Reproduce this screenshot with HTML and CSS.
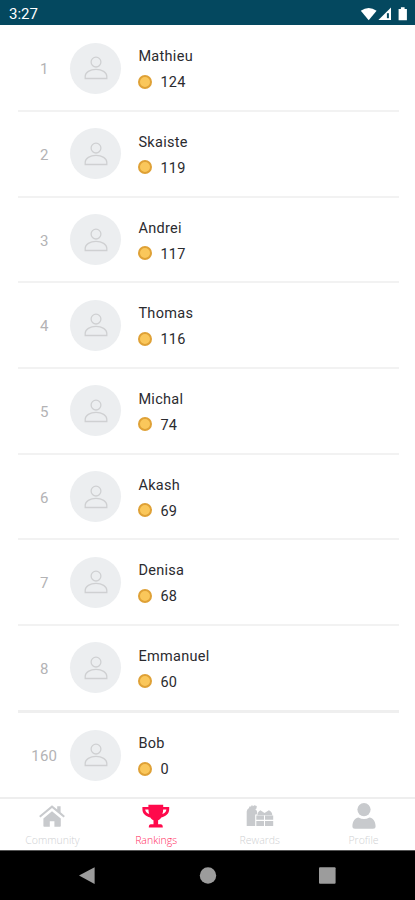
FILE: index.html
```html
<!DOCTYPE html>
<html lang="en">
<head>
<meta charset="utf-8">
<title>Rankings</title>
<link rel="stylesheet" href="styles.css">
</head>
<body>
<svg class="defs" width="0" height="0">
  <symbol id="person" viewBox="0 0 24 24">
    <circle cx="12" cy="6.1" r="4.9"/>
    <path d="M1.2 22.5V20.3C1.2 16.4 6 13.3 12 13.3S22.8 16.4 22.8 20.3V22.5Z"/>
  </symbol>
</svg>
<header class="status">
  <span>3:27</span>
  <svg class="status-icons" width="48" height="16" viewBox="0 0 48 16">
    <path d="M0.8 4.8Q8.7-.7 16.6 4.8L8.7 14.3Z"/>
    <path d="M31 1.5V14H18.4Z"/>
    <path class="signal-gap" d="M26.9 7.2h2v5h-2Z"/>
    <path d="M38.6 3h2.3V1.2h3.7V3h2.3v11.2h-8.3Z"/>
  </svg>
</header>
<main class="list">
  <div class="row"><span class="rank">1</span><span class="avatar"><svg><use href="#person"/></svg></span><div class="info"><span class="name">Mathieu</span><span class="score"><i class="coin"></i>124</span></div></div>
  <div class="row"><span class="rank">2</span><span class="avatar"><svg><use href="#person"/></svg></span><div class="info"><span class="name">Skaiste</span><span class="score"><i class="coin"></i>119</span></div></div>
  <div class="row"><span class="rank">3</span><span class="avatar"><svg><use href="#person"/></svg></span><div class="info"><span class="name">Andrei</span><span class="score"><i class="coin"></i>117</span></div></div>
  <div class="row"><span class="rank">4</span><span class="avatar"><svg><use href="#person"/></svg></span><div class="info"><span class="name">Thomas</span><span class="score"><i class="coin"></i>116</span></div></div>
  <div class="row"><span class="rank">5</span><span class="avatar"><svg><use href="#person"/></svg></span><div class="info"><span class="name">Michal</span><span class="score"><i class="coin"></i>74</span></div></div>
  <div class="row"><span class="rank">6</span><span class="avatar"><svg><use href="#person"/></svg></span><div class="info"><span class="name">Akash</span><span class="score"><i class="coin"></i>69</span></div></div>
  <div class="row"><span class="rank">7</span><span class="avatar"><svg><use href="#person"/></svg></span><div class="info"><span class="name">Denisa</span><span class="score"><i class="coin"></i>68</span></div></div>
  <div class="row last"><span class="rank">8</span><span class="avatar"><svg><use href="#person"/></svg></span><div class="info"><span class="name">Emmanuel</span><span class="score"><i class="coin"></i>60</span></div></div>
  <div class="row own"><span class="rank">160</span><span class="avatar"><svg><use href="#person"/></svg></span><div class="info"><span class="name">Bob</span><span class="score"><i class="coin"></i>0</span></div></div>
</main>
<nav class="tabs">
  <a class="tab">
    <svg width="28" height="28" viewBox="0 0 28 28">
      <path d="M14 9.2 22.8 16.5V23.9q0 .8-.8.8H16.4V19.2H11.8V24.7H6.2q-.8 0-.8-.8V16.5Z"/>
      <path d="M14 3.2 19.2 7.5V4.2H22.6V10.2L26.9 13.9 25.6 15.5 14 6.1 2.4 15.5 1.1 13.9Z"/>
    </svg>
    <span>Community</span>
  </a>
  <a class="tab active">
    <svg width="28" height="28" viewBox="0 0 28 28">
      <path fill-rule="evenodd" d="M6.4 2.7H21.2V5H27.2V7.3C27.2 11.4 24 14.6 19.3 15.4C18 17.2 16.8 18 16.1 18.3V22.3H18.7Q20.8 22.3 20.8 25.5H6.8Q6.8 22.3 8.9 22.3H11.5V18.3C10.8 18 9.6 17.2 8.3 15.4C3.6 14.6.4 11.4.4 7.3V5H6.4ZM3.2 7.6C3.4 9.6 4.8 11.2 7.2 12Q6.5 10 6.4 7.6ZM21.2 7.6Q21.1 10 20.4 12C22.8 11.2 24.2 9.6 24.4 7.6Z"/>
    </svg>
    <span>Rankings</span>
  </a>
  <a class="tab">
    <svg width="28" height="28" viewBox="0 0 28 28">
      <path d="M.7 24V9.5Q.9 7.2 3 6L3.4 4.6H5.2V3.6H6.8V4.6L8.2 3.2 10.8 4.1 10.5 6.4 9.3 7.2Q11 8.3 11.2 10.2L10.8 12.6H9.2V24Z"/>
      <path d="M10.3 13.6H18V17.8H10.3ZM19 13.6H27.2V17.8H19ZM10.3 19.1H18V24H10.3ZM19 19.1H27.2V24H19Z"/>
      <path d="M11.4 13.2Q11.2 10 14.4 8.2L18.5 10.9 22.9 8.2Q26.6 10 26.2 13.2Z"/>
    </svg>
    <span>Rewards</span>
  </a>
  <a class="tab">
    <svg width="28" height="28" viewBox="0 0 28 28">
      <circle cx="14" cy="7.6" r="6.6"/>
      <path d="M2.4 24.3C2.4 19 5.4 15.4 8.5 15.4Q14 18.4 19.5 15.4C22.6 15.4 25.6 19 25.6 24.3Q25.6 26.8 23 26.8H5Q2.4 26.8 2.4 24.3Z"/>
    </svg>
    <span>Profile</span>
  </a>
</nav>
<footer class="system">
  <svg width="18" height="18" viewBox="0 0 18 18"><path d="M15.6.3V16.9L0 8.6Z"/></svg>
  <svg width="18" height="18" viewBox="0 0 18 18"><circle cx="9" cy="8.5" r="8.2"/></svg>
  <svg width="18" height="18" viewBox="0 0 18 18"><rect x="0" y=".2" width="16.6" height="16.6" rx="1"/></svg>
</footer>
</body>
</html>
```
FILE: styles.css
```css
* { box-sizing: border-box; }
body {
  margin: 0;
  width: 415px;
  height: 900px;
  display: flex;
  flex-direction: column;
  overflow: hidden;
  background: #fff;
  font-family: Roboto, sans-serif;
  color: #2b2b2f;
}
.defs { display: none; }
.status {
  height: 25px;
  flex: none;
  display: flex;
  align-items: center;
  justify-content: space-between;
  padding: 2px 7px 0 9px;
  background: #04485f;
  color: #fff;
  font-size: 15px;
}
.status-icons { fill: #fff; }
.status-icons .signal-gap { fill: #04485f; }
.list {
  height: 772px;
  flex: none;
  padding: 1.3px 16px 0 18px;
}
.row {
  height: 85.7px;
  display: flex;
  align-items: center;
  border-bottom: 2px solid #f2f2f2;
}
.row.last { border-bottom: 3px solid #efefef; height: 86.4px; }
.row.own { border: 0; }
.rank {
  width: 52.4px;
  text-align: center;
  font-size: 15px;
  letter-spacing: 0.2px;
  color: #b3b3b5;
  padding-top: 2px;
}
.avatar {
  width: 51px;
  height: 51px;
  border-radius: 50%;
  background: #eceef0;
  display: flex;
  align-items: center;
  justify-content: center;
}
.avatar svg {
  width: 24px;
  height: 24px;
  fill: none;
  stroke: #cfd0d2;
  stroke-width: 1.3;
}
.info {
  margin: 4px 0 0 17px;
  display: flex;
  flex-direction: column;
  gap: 6px;
  font-size: 14.5px;
  line-height: 20px;
  letter-spacing: 0.3px;
}
.score { display: flex; align-items: center; }
.coin {
  width: 14px;
  height: 14px;
  margin: 0 8px 3px 0;
  border-radius: 50%;
  background: #fac75b;
  border: 2px solid #dfa136;
}
.tabs {
  height: 53px;
  flex: none;
  display: grid;
  grid-template-columns: repeat(4, 103.7px);
  padding-left: 0.6px;
  border-top: 2px solid #eee;
}
.tab {
  display: flex;
  flex-direction: column;
  align-items: center;
  padding-top: 3px;
  color: #cfd1d3;
  fill: #c8cacd;
  font: 300 10.5px/14px "Open Sans", sans-serif;
}
.tab span { margin-top: 3px; }
.tab.active { color: #ff2b5d; fill: #ff0a4c; }
.system {
  height: 50px;
  flex: none;
  display: flex;
  justify-content: center;
  align-items: center;
  gap: 102px;
  background: #000;
  border-top: 1px solid #555;
  fill: #9c9c9c;
}
```
